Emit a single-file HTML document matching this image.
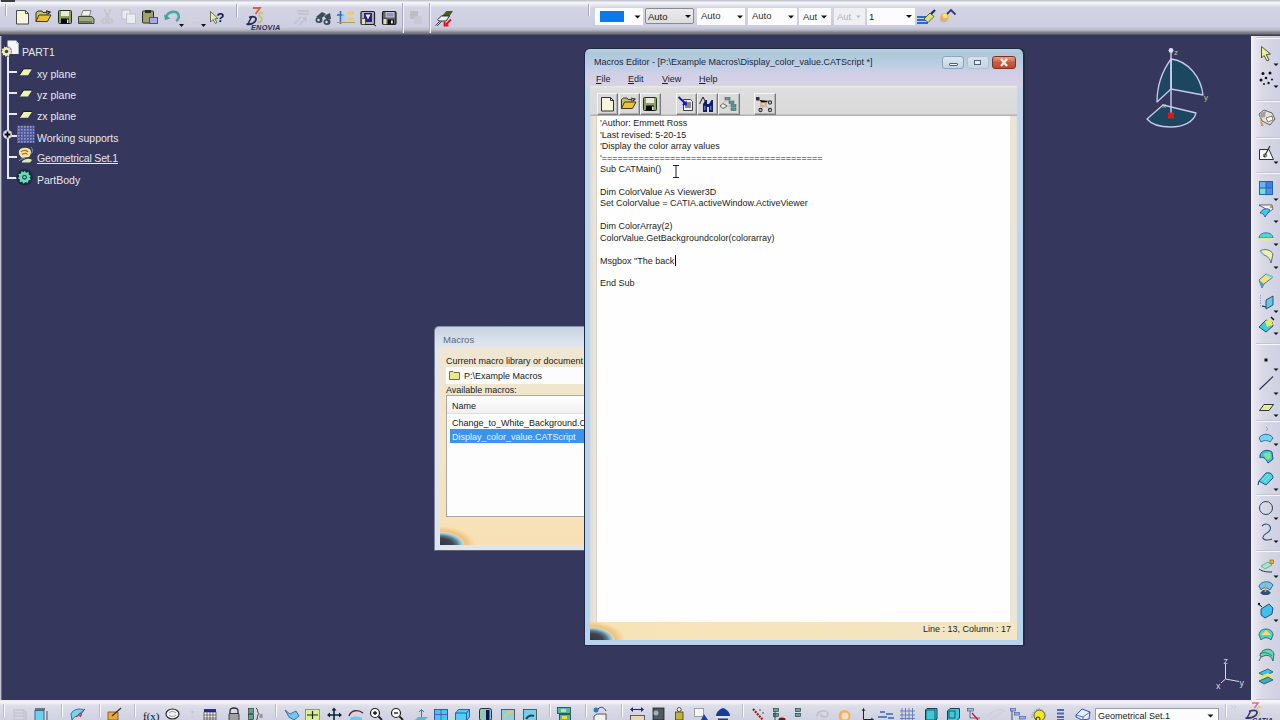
<!DOCTYPE html>
<html><head><meta charset="utf-8">
<style>
*{margin:0;padding:0;box-sizing:border-box}
html,body{width:1280px;height:720px;overflow:hidden;background:#36375c;font-family:"Liberation Sans",sans-serif}
.a{position:absolute}
#toptb{left:0;top:0;width:1280px;height:36px;background:linear-gradient(#c6c6ce 0px,#c6c6ce 1px,#f6f7fb 2px,#eceef4 4px,#d3d4e2 8px,#cfd0e2 20px,#cbcde0 27px,#b9bac4 30px,#8a8a92 32px,#6e6e78 34px,#3c3c58 35px,#36375c 36px)}
#righttb{left:1251px;top:36px;width:29px;height:664px;background:linear-gradient(90deg,#f4f4f8 0,#e8e8f0 3px,#d8d9e6 12px,#cfd0e2 29px)}
#bottb{left:0;top:700px;width:1280px;height:20px;background:linear-gradient(#e8e9f0 0,#f4f4f8 2px,#dcdde8 6px,#d0d1e2 20px)}
.t{position:absolute;white-space:pre;line-height:1}
.tree{color:#e6e6ee;font-size:10.5px}
.ed{color:#1c1c1c;font-size:9px}
.sep{position:absolute;width:2px;background:linear-gradient(90deg,#a8a8b4 0,#a8a8b4 1px,#fbfbff 1px)}
</style></head><body>
<div id="toptb" class="a"></div>
<div class="a" style="left:1px;top:0;width:14px;height:1.5px;background:#3c3c40"></div>
<div id="righttb" class="a"></div>
<div id="bottb" class="a"></div>



<!-- top toolbar icons -->
<svg class="a" style="left:0;top:0" width="1280" height="36" viewBox="0 0 1280 36">
 <g stroke="#fafaff" stroke-width="1"><path d="M6.5 4 V16"/><path d="M237.5 4 V17"/><path d="M589.5 4 V16"/></g>
 <g stroke="#a8a8b8" stroke-width="1"><path d="M5.5 4 V16"/><path d="M236.5 4 V17"/><path d="M588.5 4 V16"/><path d="M402.5 3 V33"/><path d="M429.5 3 V33"/></g>
 <g stroke="#f4f4fa" stroke-width="1"><path d="M403.5 3 V33"/><path d="M430.5 3 V33"/></g>
 <!-- new -->
 <path d="M16.5 10.5 H25.5 L28.5 13.5 V24 H16.5 Z" fill="#f6f6da" stroke="#4a4a4a"/>
 <path d="M25.5 10.5 V13.5 H28.5" fill="none" stroke="#4a4a4a"/>
 <!-- open -->
 <path d="M36 21.5 V12.5 L38 11 H42 L43 12.5 H47 V15" fill="#c8c070" stroke="#3a3a20"/>
 <path d="M36 21.5 L39 15 H51 L47.5 21.5 Z" fill="#e8c030" stroke="#3a3a20"/>
 <path d="M46 11 L50 12 L48 14" fill="none" stroke="#303030" stroke-width="1.3"/>
 <!-- save -->
 <rect x="58.5" y="10.5" width="13" height="13" rx="1" fill="#8ca060" stroke="#203018"/>
 <rect x="61" y="11" width="8" height="5" fill="#e8e8e0"/>
 <rect x="61" y="18.5" width="8" height="5" fill="#000"/>
 <rect x="67" y="19.5" width="1.5" height="3.5" fill="#e0e0e0"/>
 <!-- print -->
 <path d="M81 16 L83 10.5 H91 L89.5 16Z" fill="#f0f0f0" stroke="#808080"/>
 <path d="M78.5 16.5 H92 L94 19 V23.5 H78.5 Z" fill="#a0a880" stroke="#404838"/>
 <rect x="79" y="21" width="13" height="2" fill="#707a60"/>
 <!-- cut disabled -->
 <g stroke="#c4c4cc" stroke-width="1.6" fill="none"><path d="M104 9.5 L109 18 M111 9.5 L106 18"/><circle cx="104.5" cy="21" r="2.2"/><circle cx="110" cy="21" r="2.2"/></g>
 <!-- copy disabled -->
 <g fill="#ececf0" stroke="#c0c0c8"><rect x="122" y="10" width="8" height="9"/><rect x="126.5" y="14" width="9" height="9.5"/></g>
 <!-- paste -->
 <rect x="142.5" y="11" width="11" height="12" rx="1" fill="#a0a070" stroke="#30301a"/>
 <rect x="145" y="10" width="6" height="3" fill="#30301a"/>
 <rect x="149.5" y="17.5" width="8" height="6" fill="#a8a8e0" stroke="#4a4a90"/>
 <!-- undo -->
 <path d="M166 17 C168 11 177 10 178.5 15 C179.5 18 177.5 20 176 21" fill="none" stroke="#48a8a0" stroke-width="2.6"/>
 <path d="M164 14.5 L165 20 L170.5 18.5Z" fill="#40a098"/>
 <path d="M179 24 H184 L181.5 27Z" fill="#101010"/>
 <!-- redo disabled -->
 <path d="M189 19 C189 12 198 11 199 16" fill="none" stroke="#d4d4dc" stroke-width="2"/>
 <path d="M187.5 20.5 H201" stroke="#d4d4dc" stroke-width="1"/>
 <path d="M201 24 H206 L203.5 27Z" fill="#101010"/>
 <!-- what's this -->
 <path d="M210.5 11.5 L210.5 22 L213 19.5 L215.5 23.5 L217 22.5 L214.8 18.8 L218 18.5Z" fill="#e4eab0" stroke="#505040" stroke-width=".8"/>
 <text x="216.5" y="21.8" font-family="Liberation Sans" font-weight="bold" font-size="13" fill="#14145a">?</text>
 <!-- 3DS ENOVIA -->
 <path d="M253 8 H260 L255.5 14" fill="none" stroke="#d86040" stroke-width="1.8"/>
 <path d="M249 17.5 C254 15.5 258 17.5 255 21.5 C253 24 249 24.5 246.5 24" fill="none" stroke="#2a2a50" stroke-width="1.8"/>
 <path d="M251.5 17 L248 24" stroke="#2a2a50" stroke-width="1.5"/>
 <path d="M263 13 C259 12 258 15 260.5 17 C263 19 262 22 257.5 22.5" fill="none" stroke="#c8c070" stroke-width="1.8"/>
 <text x="251" y="29.8" font-family="Liberation Sans" font-weight="bold" font-style="italic" font-size="7.3" fill="#2a2a5a" letter-spacing=".25">ENOVIA</text>
 <!-- disabled arrows -->
 <g stroke="#c0c0c8" stroke-width="1.4" fill="none"><path d="M297 11 H309 M298 14 H309"/><path d="M294 24 L301 17 M299 25 L306 18 M303 18 H306 V21"/></g>
 <!-- binoculars -->
 <g fill="#3a4a58"><ellipse cx="319" cy="20" rx="3.5" ry="3"/><ellipse cx="327" cy="22" rx="3.5" ry="3"/><path d="M316 17 L322 12 L326 14 L322 18Z"/><path d="M324 16 L330 13 L331 19 L327 20Z"/></g>
 <g fill="#e8e8e8"><circle cx="318.5" cy="20" r="1.2"/><circle cx="326.5" cy="22" r="1.2"/></g>
 <!-- figure + bars -->
 <g stroke="#3070c0" stroke-width="1.6"><path d="M340.5 11 V24"/><path d="M337 15 H344"/></g>
 <rect x="342" y="14" width="4" height="8" fill="#b0d0e8" opacity=".7"/>
 <g fill="#e8d060"><rect x="347" y="11.5" width="7" height="3"/><rect x="347" y="17.5" width="7" height="3"/></g>
 <path d="M337 22.5 H355" stroke="#a0a060" stroke-width="1"/>
 <!-- shield/frame -->
 <rect x="361" y="11.5" width="13.5" height="13" rx="1.2" fill="#b0b0c0" stroke="#202028" stroke-width="1.2"/>
 <path d="M364 13 H372 V22 H364Z" fill="#2a2080"/>
 <path d="M365.5 14.5 H370.5 L368 19.5Z" fill="#f0f0ff"/>
 <rect x="361.5" y="18.5" width="4" height="6" rx="1" fill="#e0e0b8" stroke="#303020" stroke-width=".7"/>
 <path d="M373 24 L376 26" stroke="#101010" stroke-width="1"/>
 <!-- floppy + cylinder -->
 <rect x="382.5" y="11.5" width="13.5" height="13" rx="1.2" fill="#606a58" stroke="#202020" stroke-width="1.2"/>
 <rect x="386" y="12.5" width="8" height="4.5" fill="#9090d0" stroke="#f0f0f0" stroke-width=".6"/>
 <rect x="388" y="19.5" width="6" height="4.5" fill="#101010"/>
 <rect x="391" y="20.5" width="1.8" height="3" fill="#f0f0f0"/>
 <rect x="383" y="18.5" width="4" height="6" rx="1" fill="#e0e0b8" stroke="#303020" stroke-width=".7"/>
 <!-- disabled gray -->
 <g fill="#bcbcc4"><rect x="410" y="11" width="8" height="8" rx="1"/><rect x="414" y="16" width="8" height="8" rx="2" fill="#c8c8d0"/></g>
 <!-- plug -->
 <path d="M441 17 L446.5 11 H453 L449 17Z" fill="#4a5a20"/>
 <path d="M437.5 19.5 L441.5 16 H449.5 L446 21 H439Z" fill="#f0f4f0" stroke="#202020" stroke-width=".9"/>
 <path d="M435.5 25.5 L440 21 M437 26 L441.5 21.5" stroke="#303048" stroke-width=".9"/>
 <path d="M451 19.5 L446 24.5 M444.5 21.5 V25.5 H448.5" stroke="#e01020" stroke-width="1.8" fill="none"/>
</svg>


<!-- combos -->
<div class="a" style="left:595px;top:8px;width:48px;height:17px;background:#fcfcfe"></div>
<div class="a" style="left:600px;top:11px;width:24px;height:11px;background:#0a7ae8"></div>
<div class="a" style="left:645px;top:8px;width:49px;height:16px;background:linear-gradient(#ececec,#dcdcdc);border:1px solid #8a8a8a;border-radius:2px"></div>
<div class="a" style="left:697px;top:8px;width:48px;height:17px;background:#fcfcfe"></div>
<div class="a" style="left:748px;top:8px;width:49px;height:17px;background:#fcfcfe"></div>
<div class="a" style="left:799px;top:8px;width:32px;height:17px;background:#fcfcfe"></div>
<div class="a" style="left:834px;top:8px;width:31px;height:17px;background:#f0f0f4"></div>
<div class="a" style="left:867px;top:8px;width:48px;height:17px;background:#fcfcfe"></div>
<div class="t" style="left:648px;top:12px;font-size:9.5px;color:#202020">Auto</div>
<div class="t" style="left:701px;top:11px;font-size:9.5px;color:#303030">Auto</div>
<div class="t" style="left:752px;top:11px;font-size:9.5px;color:#303030">Auto</div>
<div class="t" style="left:803px;top:11.5px;font-size:9.5px;color:#303030">Aut</div>
<div class="t" style="left:837px;top:11.5px;font-size:9.5px;color:#b0b0b8">Aut</div>
<div class="t" style="left:869px;top:11.5px;font-size:9.5px;color:#202020">1</div>
<svg class="a" style="left:580px;top:0" width="400" height="36" viewBox="580 0 400 36">
 <g fill="#101010"><path d="M634.5 15.5 H640.5 L637.5 18.5Z"/><path d="M685 15 H691 L688 18Z"/><path d="M737 15.5 H743 L740 18.5Z"/><path d="M788 15.5 H794 L791 18.5Z"/><path d="M821 15.5 H827 L824 18.5Z"/><path d="M906 15 H912 L909 18Z"/></g>
 <path d="M856 15.5 H861 L858.5 18Z" fill="#b8b8c0"/>
 <!-- brush -->
 <g><rect x="917" y="16" width="11" height="2" fill="#2a68d8"/><rect x="917" y="19" width="11" height="2" fill="#2a68d8"/><rect x="917" y="22" width="11" height="2" fill="#2a68d8"/>
 <path d="M924 19 L930 13 L934 16.5 L928 22.5Z" fill="#e0e070" stroke="#404020" stroke-width=".8"/>
 <path d="M931 14 L935 10" stroke="#1a2a70" stroke-width="2.2"/></g>
 <!-- ball -->
 <circle cx="944.5" cy="17.5" r="4.5" fill="#e8c840"/>
 <circle cx="943.5" cy="19" r="3.5" fill="#d890d0" opacity=".5"/>
 <circle cx="945" cy="16" r="2.2" fill="#f8e868"/>
 <path d="M947 14 L951 10 L955.5 14.5" fill="none" stroke="#303a78" stroke-width="1.8"/>
</svg>


<!-- compass -->
<svg class="a" style="left:1130px;top:40px" width="100" height="100" viewBox="1130 40 100 100">
 <g stroke="#c8c8f0" stroke-width="1.3" fill="#1d4760" stroke-linejoin="round">
  <path d="M1171 59 C1188 61 1201 77 1203 95 L1171 89 Z"/>
  <path d="M1171 59 C1163 70 1157 86 1157 102 L1171 89 Z"/>
  <path d="M1147 119 L1163 105 L1196 113 C1194 122 1183 127 1171 127 C1160 127 1151 124 1147 119Z"/>
 </g>
 <path d="M1171 51 V115" stroke="#d0d0f4" stroke-width="1.4"/>
 <circle cx="1171" cy="50.5" r="2.4" fill="#e0e0ff"/>
 <rect x="1168" y="112.5" width="6" height="6" fill="#e01818"/>
 <g font-family="Liberation Sans" font-size="8" fill="#c8c890"><text x="1174" y="55">z</text><text x="1204" y="100">y</text><text x="1162" y="108">x</text></g>
</svg>
<!-- axis -->
<svg class="a" style="left:1210px;top:650px" width="40" height="45" viewBox="1210 650 40 45">
 <g stroke="#d8d8e8" stroke-width="1" fill="none"><path d="M1225.5 679 V664"/><path d="M1225.5 679 L1239 681.5"/><path d="M1225.5 679 L1221 683"/></g>
 <g font-family="Liberation Sans" font-size="9" fill="#d8d8e8"><text x="1223.5" y="664">z</text><text x="1239.5" y="685.5">y</text><text x="1216" y="688.5">x</text></g>
</svg>


<!-- right toolbar -->
<svg class="a" style="left:1251px;top:36px" width="29" height="684" viewBox="1251 36 29 684">
 <g stroke-width="1"><path d="M1256 37.5 H1280" stroke="#c4c4d2"/><path d="M1256 38.5 H1280" stroke="#f8f8ff"/><path d="M1256 100.5 H1280" stroke="#c4c4d2"/><path d="M1256 101.5 H1280" stroke="#f8f8ff"/><path d="M1256 137.5 H1280" stroke="#c4c4d2"/><path d="M1256 138.5 H1280" stroke="#f8f8ff"/><path d="M1256 172.5 H1280" stroke="#c4c4d2"/><path d="M1256 173.5 H1280" stroke="#f8f8ff"/><path d="M1256 343.5 H1280" stroke="#c4c4d2"/><path d="M1256 344.5 H1280" stroke="#f8f8ff"/><path d="M1256 420.5 H1280" stroke="#c4c4d2"/><path d="M1256 421.5 H1280" stroke="#f8f8ff"/><path d="M1256 494.5 H1280" stroke="#c4c4d2"/><path d="M1256 495.5 H1280" stroke="#f8f8ff"/><path d="M1256 550.5 H1280" stroke="#c4c4d2"/><path d="M1256 551.5 H1280" stroke="#f8f8ff"/><path d="M1256 699.5 H1280" stroke="#c4c4d2"/><path d="M1256 700.5 H1280" stroke="#f8f8ff"/></g>
 <g fill="#101010"><path d="M1273.5 63.5 H1278.5 L1276 66.0Z"/><path d="M1273.5 85.5 H1278.5 L1276 88.0Z"/><path d="M1273.5 161.5 H1278.5 L1276 164.0Z"/><path d="M1273.5 198.5 H1278.5 L1276 201.0Z"/><path d="M1273.5 220.5 H1278.5 L1276 223.0Z"/><path d="M1273.5 243.5 H1278.5 L1276 246.0Z"/><path d="M1273.5 266.5 H1278.5 L1276 269.0Z"/><path d="M1273.5 310.5 H1278.5 L1276 313.0Z"/><path d="M1273.5 332.5 H1278.5 L1276 335.0Z"/><path d="M1273.5 368.5 H1278.5 L1276 371.0Z"/><path d="M1273.5 392.5 H1278.5 L1276 395.0Z"/><path d="M1273.5 414.5 H1278.5 L1276 417.0Z"/><path d="M1273.5 443.5 H1278.5 L1276 446.0Z"/><path d="M1273.5 488.5 H1278.5 L1276 491.0Z"/><path d="M1273.5 517.5 H1278.5 L1276 520.0Z"/><path d="M1273.5 540.5 H1278.5 L1276 543.0Z"/><path d="M1273.5 575.5 H1278.5 L1276 578.0Z"/><path d="M1273.5 619.5 H1278.5 L1276 622.0Z"/></g>
 <!-- cursor -->
 <path d="M1261.5 46.5 V58 L1264 55.5 L1267 61 L1269 60 L1266.3 54.5 L1270.5 54Z" fill="#e8f098" stroke="#404838" stroke-width=".9"/>
 <!-- scatter -->
 <g fill="#101018"><circle cx="1263" cy="73.5" r="1.5"/><circle cx="1270" cy="73" r="1.5"/><circle cx="1261" cy="80" r="1.5"/><circle cx="1266" cy="78" r="1.3"/><circle cx="1268.5" cy="83" r="1.2"/><circle cx="1272" cy="79.5" r="1"/><circle cx="1264" cy="84" r="1"/></g>
 <!-- sketcher -->
 <path d="M1259 114 L1264 110 L1272 113 L1275 119 L1270 125 L1262 121Z" fill="#e8e0d0" stroke="#404040" stroke-width=".8"/>
 <path d="M1261 113 L1266 111 L1265 117 L1260 118Z" fill="#a0a0a0"/>
 <path d="M1260 119 L1264 126 L1261 126Z" fill="#e09050"/>
 <path d="M1266 118 L1272 116 L1273 120 L1268 122Z" fill="#f8f8f8" stroke="#303030" stroke-width=".6"/>
 <!-- sketch edit -->
 <path d="M1259.5 149.5 H1269 L1273.5 159.5 H1259.5Z" fill="#f8f8f8" stroke="#303030" stroke-width="1"/>
 <path d="M1264 157 L1270 146" stroke="#303030" stroke-width="1.2"/>
 <circle cx="1265" cy="155.5" r="1.6" fill="none" stroke="#303030" stroke-width=".8"/>
 <!-- blue grid -->
 <rect x="1259" y="181" width="14" height="14" fill="#2060c0"/>
 <g fill="#70b0f0"><rect x="1260" y="182" width="5.5" height="5.5"/><rect x="1266.5" y="182" width="5.5" height="5.5" fill="#4080d8"/><rect x="1260" y="188.5" width="5.5" height="5.5" fill="#70e0d0"/><rect x="1266.5" y="188.5" width="5.5" height="5.5" fill="#5090e0"/></g>
 <!-- sweep -->
 <path d="M1259 205 L1272 205 L1273 209 L1268 213 L1266 209Z" fill="#f8f8f8" stroke="#303030" stroke-width=".7"/>
 <path d="M1260 213 C1263 208 1268 208 1270 210 L1265 217 C1264 214 1262 213 1260 213Z" fill="#40c8e8" stroke="#2030a0" stroke-width=".7"/>
 <circle cx="1271" cy="207" r="1.3" fill="#d0a040"/>
 <!-- dome -->
 <path d="M1259 238 C1259 231 1273 231 1273 238Z" fill="#50d8d0" stroke="#2070a0" stroke-width=".8"/>
 <rect x="1259" y="238" width="14" height="2.5" fill="#e0e8a0"/>
 <!-- curved surface -->
 <path d="M1260 251 C1265 248 1271 250 1273 254 L1271 263 C1270 258 1267 256 1264 255Z" fill="#f0f0b0" stroke="#405070" stroke-width=".8"/>
 <path d="M1260 251 L1264 255" stroke="#70b0d0" stroke-width="1.5"/>
 <!-- yellow panel -->
 <path d="M1259 280 L1266 274 L1273 277 L1264 284 L1262 288Z" fill="#f0e080" stroke="#306080" stroke-width=".8"/>
 <path d="M1259 280 L1262 288 L1264 284Z" fill="#40a8d0"/>
 <path d="M1266 274 L1273 277" stroke="#60d0e0" stroke-width="1.5"/>
 <!-- dashed + panel -->
 <path d="M1260.5 295 V306 H1264" fill="none" stroke="#8090b0" stroke-width=".8" stroke-dasharray="1.5 1"/>
 <path d="M1266 300 L1273 296 V305 L1266 309Z" fill="#60c8e8" stroke="#203050" stroke-width=".8"/>
 <path d="M1262 306 L1266 307" stroke="#202040" stroke-width="1.2"/>
 <!-- yellow-blue arrow -->
 <path d="M1259 327 L1266 320 L1272 322 L1273 326 L1266 332Z" fill="#40c8e0" stroke="#103040" stroke-width=".8"/>
 <path d="M1265 321 L1271 319 L1273 325 L1267 327Z" fill="#e8e860"/>
 <path d="M1271 317 L1274 320" stroke="#101010" stroke-width="1.5"/>
 <!-- point -->
 <rect x="1264.5" y="358.5" width="3" height="3" fill="#101010"/>
 <!-- line -->
 <path d="M1259.5 389.5 L1273 376.5" stroke="#203050" stroke-width="1.1"/>
 <!-- plane -->
 <path d="M1259.5 410.5 L1264 404.5 H1273.5 L1269 410.5Z" fill="#e0ee98" stroke="#202020" stroke-width=".9"/>
 <!-- surface -->
 <path d="M1259 438 C1262 433 1270 433 1273 438 L1270 442 C1267 440 1264 440 1261 442Z" fill="#70d8e8" stroke="#2050a0" stroke-width=".8"/>
 <path d="M1266 431 C1268 429 1268 428 1266 427" fill="none" stroke="#8090b0" stroke-width=".8"/>
 <!-- green arrows surface -->
 <path d="M1260 455 C1262 450 1268 449 1272 452 L1273 459 L1268 463 C1266 458 1262 456 1260 458Z" fill="#40c0e8" stroke="#103070" stroke-width=".8"/>
 <path d="M1263 454 L1270 452 L1271 458 L1267 460Z" fill="#80e880"/>
 <!-- channel -->
 <path d="M1259 481 L1266 473 C1270 472 1273 474 1273 478 L1266 485Z" fill="#50d0d8" stroke="#103070" stroke-width=".8"/>
 <path d="M1262 480 L1268 474 M1264 482 L1270 476" stroke="#a0f0c0" stroke-width=".8"/>
 <path d="M1259 481 L1258 485" stroke="#103070" stroke-width="1"/>
 <!-- circle -->
 <circle cx="1266" cy="508" r="6.5" fill="none" stroke="#304060" stroke-width="1"/>
 <!-- spline -->
 <path d="M1262 526 C1266 522 1272 525 1270 530 C1268 534 1262 534 1263 538 C1264 541 1270 540 1272 539" fill="none" stroke="#304880" stroke-width="1.1"/>
 <!-- 20 -->
 <path d="M1259 569 C1263 572 1268 572 1272 572" stroke="#203050" stroke-width="1" fill="none"/>
 <path d="M1261 566 L1268 562 L1272 565 L1265 569Z" fill="#a0e8c8" stroke="#40a080" stroke-width=".7"/>
 <rect x="1270" y="560" width="3.5" height="3.5" fill="#f0b040" stroke="#805010" stroke-width=".6"/>
 <!-- 21 -->
 <path d="M1259 586 C1261 581 1270 580 1273 585 L1270 590 C1267 587 1263 587 1261 590Z" fill="#70c8f0" stroke="#205080" stroke-width=".8"/>
 <path d="M1260 593 L1263 590 H1268 L1271 593 L1268 595 H1263Z" fill="#305070"/>
 <path d="M1265.5 584 V592" stroke="#e0a030" stroke-width="1.6"/>
 <!-- 22 -->
 <path d="M1261 609 L1269 604 L1273 608 L1272 614 L1265 618 L1261 615Z" fill="#40c0e8" stroke="#103050" stroke-width=".8"/>
 <path d="M1258.5 604 L1262 607" stroke="#101010" stroke-width="1"/><circle cx="1259" cy="604" r="1.2" fill="#101010"/>
 <!-- 23 -->
 <path d="M1259 635 C1259 627 1273 627 1273 635 L1271 640 C1268 637 1264 637 1261 640Z" fill="#50d0d0" stroke="#205070" stroke-width=".8"/>
 <path d="M1261 635 L1266 630 L1271 635Z" fill="#f0e060"/>
 <!-- 24 -->
 <path d="M1260 656 C1260 649 1272 646 1274 654 L1273 661 C1271 655 1266 654 1262 657Z" fill="#60d8b8" stroke="#205050" stroke-width=".8"/>
 <path d="M1260 654 C1263 652 1268 652 1272 656" stroke="#205050" stroke-width=".7" fill="none"/>
 <path d="M1261 657 L1259 661" stroke="#404040" stroke-width=".8"/>
 <!-- 25 -->
 <path d="M1259 673 L1268 669 L1273 672 L1264 676Z" fill="#40c0e8" stroke="#104050" stroke-width=".7"/>
 <path d="M1259 677 L1268 673 L1273 676 L1264 680Z" fill="#e8e860"/>
 <path d="M1259 681 L1268 677 L1273 680 L1264 684Z" fill="#40a8c0" stroke="#104050" stroke-width=".7"/>
</svg>


<!-- bottom toolbar -->
<svg class="a" style="left:0;top:700px" width="1251" height="20" viewBox="0 700 1251 20">
 <g stroke-width="1"><path d="M3.5 704 V717" stroke="#b8b8c6"/><path d="M4.5 704 V717" stroke="#fafaff"/><path d="M61.5 704 V717" stroke="#b8b8c6"/><path d="M62.5 704 V717" stroke="#fafaff"/><path d="M99.5 704 V717" stroke="#b8b8c6"/><path d="M100.5 704 V717" stroke="#fafaff"/><path d="M134.5 704 V717" stroke="#b8b8c6"/><path d="M135.5 704 V717" stroke="#fafaff"/><path d="M275.5 704 V717" stroke="#b8b8c6"/><path d="M276.5 704 V717" stroke="#fafaff"/><path d="M549.5 704 V717" stroke="#b8b8c6"/><path d="M550.5 704 V717" stroke="#fafaff"/><path d="M585.5 704 V717" stroke="#b8b8c6"/><path d="M586.5 704 V717" stroke="#fafaff"/><path d="M621.5 704 V717" stroke="#b8b8c6"/><path d="M622.5 704 V717" stroke="#fafaff"/><path d="M742.5 704 V717" stroke="#b8b8c6"/><path d="M743.5 704 V717" stroke="#fafaff"/></g>
 <!-- gray disabled -->
 <g fill="none" stroke="#c0c0c8" stroke-width="1.2"><rect x="14" y="710" width="10" height="10"/><path d="M14 713 H24 M14 716 H24"/><path d="M26 711 V720"/></g>
 <!-- blue glass -->
 <path d="M35 709 H45" stroke="#303030" stroke-width="1.2"/>
 <rect x="35" y="710.5" width="9" height="10" fill="#70d0ec" stroke="#205070" stroke-width=".8"/>
 <path d="M47 711 V720" stroke="#303030" stroke-width=".8"/>
 <!-- curved -->
 <path d="M71 714 C73 709 80 708 84 710 L80 716 C77 715 74 717 72 720Z" fill="#70d8e8" stroke="#2050a0" stroke-width=".8"/>
 <path d="M76 717 L85 709 M78 715 C81 712 83 715 80 717" stroke="#c02040" stroke-width="1" fill="none"/>
 <!-- orange -->
 <path d="M108 712 H118 V720 H108Z" fill="#e8a840" stroke="#805010" stroke-width=".8"/>
 <path d="M112 716 L121 708" stroke="#303030" stroke-width="1.2"/>
 <!-- fx -->
 <text x="143" y="720" font-family="Liberation Serif" font-size="11" fill="#101010">f(x)</text>
 <!-- brain -->
 <ellipse cx="172.5" cy="714" rx="6.5" ry="5" fill="#f0f0f0" stroke="#202020" stroke-width="1.1"/>
 <path d="M169 713 C171 711 174 711 176 713 M169 715 C171 717 174 717 176 715" stroke="#707070" stroke-width=".7" fill="none"/>
 <!-- small gray -->
 <circle cx="192.5" cy="712" r="1.5" fill="#c8c8d0"/><path d="M191 715 H194 V719 H191Z" fill="#d0d0d8"/>
 <!-- grid -->
 <rect x="204" y="709" width="12" height="3" fill="#2828c0"/>
 <rect x="204" y="712" width="12" height="8" fill="#f0f0f0" stroke="#202020" stroke-width=".6"/>
 <path d="M207 712 V720 M210 712 V720 M213 712 V720 M204 715 H216 M204 718 H216" stroke="#303030" stroke-width=".6"/>
 <!-- lock -->
 <path d="M230 714 V711 C230 707 238 707 238 711 V714" fill="none" stroke="#303030" stroke-width="1.3"/>
 <rect x="229" y="713.5" width="10" height="7" rx="1" fill="#a0a0a0" stroke="#202020" stroke-width=".8"/>
 <!-- equation -->
 <rect x="248.5" y="708.5" width="5" height="5" fill="#60a090" stroke="#202020" stroke-width=".6"/>
 <rect x="248.5" y="714.5" width="5" height="5" fill="#60a090" stroke="#202020" stroke-width=".6"/>
 <path d="M256 708 C258 708 257 713 259 713.5 C257 714 258 720 256 720" fill="none" stroke="#202020" stroke-width=".8"/>
 <path d="M259.5 715 H262.5 M259.5 717 H262.5" stroke="#202020" stroke-width=".7"/>
 <!-- blue figure -->
 <path d="M285 710 L290 714 L296 711 L299 716 L294 720 L289 717 Z" fill="#70c8f0" stroke="#305080" stroke-width=".8"/>
 <!-- yellow square arrows -->
 <rect x="305.5" y="709.5" width="14" height="11" fill="#d8f090" stroke="#40a080" stroke-width=".8"/>
 <path d="M312.5 711 V719 M307 715 H318" stroke="#202020" stroke-width="1.2"/>
 <!-- pan -->
 <path d="M334 709 V720 M328 715 H341" stroke="#10203a" stroke-width="1.6"/>
 <path d="M334 707.5 L336.5 710.5 H331.5Z M327 715 L330 712.5 V717.5Z M342 715 L339 712.5 V717.5Z" fill="#10203a"/>
 <!-- rotate -->
 <path d="M349 716 C351 710 358 709 363 713" stroke="#303030" stroke-width="1.3" fill="#f0c8d8"/>
 <path d="M350 718 C353 716 358 716 362 718 V720 H350Z" fill="#70c8e8"/>
 <!-- zoom in/out -->
 <circle cx="375" cy="713" r="4.5" fill="#fafafa" stroke="#202020" stroke-width="1.2"/>
 <path d="M373 713 H377 M375 711 V715" stroke="#101010" stroke-width="1.3"/>
 <path d="M378.5 716.5 L382 720" stroke="#202020" stroke-width="1.8"/>
 <circle cx="396" cy="713" r="4.5" fill="#fafafa" stroke="#202020" stroke-width="1.2"/>
 <path d="M394 713 H398" stroke="#101010" stroke-width="1.3"/>
 <path d="M399.5 716.5 L403 720" stroke="#202020" stroke-width="1.8"/>
 <!-- normal view -->
 <path d="M421.5 718 V710 M419 712 L421.5 709.5 L424 712" stroke="#307080" stroke-width=".9" fill="none"/>
 <path d="M415 720 L418 717 H428 L425 720Z" fill="#60b8d0"/>
 <!-- multiview blue -->
 <rect x="434.5" y="709.5" width="13" height="11" fill="#40c8f0" stroke="#2040a0" stroke-width=".8"/>
 <path d="M441 709.5 V720 M434.5 714.5 H447.5" stroke="#6040a0" stroke-width=".8"/>
 <!-- iso cube -->
 <path d="M455.5 713 L458.5 709.5 H469.5 V717 L466.5 720.5 H455.5Z" fill="#50d0f0" stroke="#2040a0" stroke-width=".8"/>
 <path d="M455.5 713 H466.5 V720.5 M466.5 713 L469.5 709.5" stroke="#2040a0" stroke-width=".8" fill="none"/>
 <!-- glass -->
 <rect x="479.5" y="708.5" width="12" height="12" rx="2" fill="#90c8b0" stroke="#303030" stroke-width="1"/>
 <rect x="486" y="710" width="3.5" height="10" fill="#101060"/>
 <!-- small views -->
 <rect x="501.5" y="709.5" width="13" height="11" fill="#90d0e0" stroke="#404040" stroke-width=".8"/>
 <path d="M504 718 C506 713 510 712 513 712" stroke="#e0c870" stroke-width="2" fill="none"/>
 <rect x="523.5" y="709.5" width="13" height="11" fill="#70d0e8" stroke="#404040" stroke-width=".8"/>
 <path d="M526 719 C528 716 531 715 534 716" stroke="#304050" stroke-width="2" fill="none"/>
 <!-- two small -->
 <rect x="557.5" y="707.5" width="13" height="6" fill="#50b8b0" stroke="#204040" stroke-width=".8"/>
 <rect x="559.5" y="714.5" width="11" height="6" fill="#50b8b0" stroke="#204040" stroke-width=".8"/>
 <rect x="561" y="709" width="5" height="3" fill="#e0e040"/><rect x="562" y="716" width="5" height="3" fill="#e0e040"/>
 <!-- sphere cube -->
 <circle cx="596" cy="710" r="2.5" fill="#2080b0"/>
 <path d="M598 709 C601 706 604 707 606 711" stroke="#3030b0" stroke-width="1" fill="none"/>
 <path d="M594 720 V716 L597 714 H606 V720" fill="#f0f0f0" stroke="#303030" stroke-width=".8"/>
 <!-- ruler -->
 <path d="M631 709.5 H643" stroke="#202870" stroke-width="1.1"/>
 <path d="M630 709.5 L633 707 V712Z M644 709.5 L641 707 V712Z" fill="#202870"/>
 <rect x="630.5" y="715.5" width="14" height="5" fill="#e8d8b0" stroke="#404040" stroke-width=".8"/>
 <!-- dark machine -->
 <rect x="653" y="708" width="11" height="12" fill="#505860" stroke="#202020" stroke-width=".8"/>
 <circle cx="656" cy="713" r="2.5" fill="#a0b0c0"/>
 <!-- cylinder -->
 <rect x="675.5" y="712" width="7.5" height="8" fill="#c0b040" stroke="#404010" stroke-width=".8"/>
 <circle cx="679.2" cy="709.5" r="2" fill="#f0f0f0" stroke="#303020" stroke-width=".8"/>
 <!-- gray/blue -->
 <rect x="694.5" y="708.5" width="9" height="8" fill="#f4f4f4" stroke="#909090" stroke-width=".8"/>
 <path d="M701 720 L704 714 L708 720Z" fill="#2040a0"/>
 <!-- blue cone -->
 <path d="M716 716 C716 711 722 708 723 708 C724 708 730 711 730 716Z" fill="#1a3aa0"/>
 <path d="M716 717 H730" stroke="#f0f0f0" stroke-width="1.2"/>
 <path d="M718 718.5 H728 V720 H718Z" fill="#1a3aa0"/>
 <!-- red dashed -->
 <path d="M753 709 L763 720" stroke="#902020" stroke-width="2.2" stroke-dasharray="2 1"/>
 <g fill="#404040"><circle cx="760" cy="710" r=".8"/><circle cx="763" cy="713" r=".8"/></g>
 <!-- tree struct -->
 <rect x="773.5" y="708.5" width="5" height="3" fill="#60a8a0" stroke="#203030" stroke-width=".6"/>
 <rect x="773.5" y="713.5" width="5" height="3" fill="#60a8a0" stroke="#203030" stroke-width=".6"/>
 <path d="M775 711.5 V720" stroke="#203030" stroke-width=".8"/>
 <ellipse cx="782" cy="719.5" rx="3.5" ry="2" fill="#801010"/>
 <rect x="795.5" y="708.5" width="5" height="3" fill="#60a8a0" stroke="#203030" stroke-width=".6"/>
 <rect x="795.5" y="713.5" width="5" height="3" fill="#60a8a0" stroke="#203030" stroke-width=".6"/>
 <!-- gray swirl -->
 <path d="M817 716 C817 710 828 709 828 714 C828 718 821 718 821 714" fill="none" stroke="#c0c0c8" stroke-width="1.6"/>
 <!-- orange blob -->
 <circle cx="844.5" cy="716" r="6" fill="#f0b060"/>
 <circle cx="845" cy="716" r="3.5" fill="#f8e0c0"/>
 <!-- axis -->
 <path d="M863.5 709 V719.5 H873" stroke="#202030" stroke-width="1" fill="none"/>
 <path d="M862 711 L863.5 708.5 L865 711 M871 718 L873.5 719.5 L871 721" fill="none" stroke="#202030" stroke-width=".8"/>
 <!-- blue list -->
 <g fill="#6080c0"><rect x="880" y="711" width="5" height="2"/><rect x="886" y="713" width="7" height="2"/><rect x="878" y="716" width="9" height="2"/><rect x="888" y="717" width="6" height="2"/></g>
 <!-- grid blue -->
 <path d="M902 708 V720 M905.5 708 V720 M909 708 V720 M912.5 708 V720 M900 711 H915 M900 715 H915 M900 718.5 H915" stroke="#5070b0" stroke-width=".8"/>
 <!-- teal boxes -->
 <path d="M925.5 710 L927 708.5 H937 V719 L935 720.5 H925.5Z" fill="#40c8d8" stroke="#104050" stroke-width="1"/>
 <rect x="926" y="710" width="9" height="10" fill="none" stroke="#104050" stroke-width=".8"/>
 <path d="M947.5 711 L950 708.5 H959.5 V718 L957 720.5 H947.5Z" fill="#40c8d8" stroke="#104050" stroke-width="1"/>
 <rect x="949" y="711" width="6" height="7" fill="none" stroke="#104050" stroke-width=".8"/>
 <!-- red tree -->
 <rect x="967.5" y="708.5" width="6" height="2.5" fill="#a0c0e0" stroke="#305080" stroke-width=".6"/>
 <path d="M970 711 V718 H980" stroke="#305080" stroke-width=".8" fill="none"/>
 <path d="M972 713 L978 720" stroke="#d01020" stroke-width="1.3"/>
 <!-- gray disabled -->
 <path d="M989 716 C992 710 1000 709 1004 711 C1000 714 995 717 990 719" fill="none" stroke="#d0d0d8" stroke-width="1.4"/>
 <!-- tree list -->
 <g fill="#a0b0e0" stroke="#4050a0" stroke-width=".6"><rect x="1010.5" y="708.5" width="5" height="2.5"/><rect x="1014.5" y="712.5" width="5" height="2.5"/><rect x="1019.5" y="716.5" width="6" height="2.5"/></g>
 <path d="M1012 711 V720" stroke="#303030" stroke-width=".8"/>
 <!-- yellow ball -->
 <path d="M1032 718 C1031 712 1036 708 1041 709" stroke="#8090b0" stroke-width=".8" fill="none" stroke-dasharray="1.5 1"/>
 <circle cx="1039.5" cy="715.5" r="5.5" fill="#f0e820" stroke="#303010" stroke-width=".8"/>
 <circle cx="1038" cy="719" r="2" fill="none" stroke="#202020" stroke-width="1"/>
 <!-- list -->
 <g fill="#5068b0"><rect x="1057" y="709" width="7" height="2"/><rect x="1057" y="712.5" width="7" height="2"/><rect x="1057" y="716" width="7" height="2"/><rect x="1057" y="719" width="7" height="1"/></g>
 <!-- blue box -->
 <path d="M1076 715 L1082 709 L1090 712 L1089 719 L1082 720 L1076 717Z" fill="#e8f0ff" stroke="#2a50c0" stroke-width="1"/>
 <path d="M1076 715 L1083 717 L1090 712 M1083 717 V720" stroke="#2a50c0" stroke-width=".8" fill="none"/>
</svg>
<svg class="a" style="left:1220px;top:700px" width="30" height="20"><path d="M5.5 4 V17" stroke="#c0c0cc"/><path d="M6.5 4 V17" stroke="#fafaff"/><path d="M11 5 L13 7 L11 9 M14 5 L16 7 L14 9" stroke="#c8c8d4" fill="none" stroke-width=".8"/></svg>
<div class="a" style="left:1095px;top:708px;width:124px;height:13px;background:#fcfcfc;border:1px solid #9a9aa4;border-bottom:none"></div>
<div class="t" style="left:1098px;top:711.5px;font-size:9px;color:#202020">Geometrical Set.1</div>
<svg class="a" style="left:1205px;top:710px" width="10" height="10"><path d="M2.5 4.5 H8.5 L5.5 7.5Z" fill="#101010"/></svg>



<svg class="a" style="left:1240px;top:700px" width="40" height="20" viewBox="1240 700 40 20">
 <path d="M1252 703 H1258 L1254.5 708" fill="none" stroke="#d87080" stroke-width="1.5"/>
 <path d="M1249 711.5 C1255 709 1259 711 1256 715 C1254 717.5 1249 718.5 1245.5 718" fill="none" stroke="#34346e" stroke-width="1.8"/>
 <path d="M1250.5 711.5 L1247 718" stroke="#34346e" stroke-width="1.5"/>
 <path d="M1261 707 C1257 706.5 1256 709 1258.5 711 C1261 713 1260 716.5 1256 717" fill="none" stroke="#d8c890" stroke-width="1.5"/>
 <text x="1252" y="723" font-family="Liberation Sans" font-weight="bold" font-style="italic" font-size="7" fill="#2a2a58">CATIA</text>
</svg>

<!-- tree -->
<div class="a" style="left:0;top:36px;width:1px;height:664px;background:#c4c4d0"></div><div class="a" style="left:1px;top:36px;width:1px;height:664px;background:#6a6a88"></div>
<div class="a" style="left:7px;top:56px;width:2px;height:123px;background:#e8e8f0"></div>
<div class="a" style="left:8px;top:71px;width:9px;height:2px;background:#e8e8f0"></div>
<div class="a" style="left:8px;top:92px;width:9px;height:2px;background:#e8e8f0"></div>
<div class="a" style="left:8px;top:113px;width:9px;height:2px;background:#e8e8f0"></div>
<div class="a" style="left:8px;top:135px;width:9px;height:2px;background:#e8e8f0"></div>
<div class="a" style="left:8px;top:156px;width:9px;height:2px;background:#e8e8f0"></div>
<div class="a" style="left:8px;top:177px;width:9px;height:2px;background:#e8e8f0"></div>
<div class="t tree" style="left:22px;top:47px">PART1</div>
<div class="t tree" style="left:37px;top:69px">xy plane</div>
<div class="t tree" style="left:37px;top:90px">yz plane</div>
<div class="t tree" style="left:37px;top:111px">zx plane</div>
<div class="t tree" style="left:37px;top:133px">Working supports</div>
<div class="t tree" style="left:37px;top:152.5px;letter-spacing:-0.18px;text-decoration:underline;text-underline-offset:1px">Geometrical Set.1</div>
<div class="t tree" style="left:37px;top:175px">PartBody</div>


<svg class="a" style="left:0;top:36px" width="40" height="160" viewBox="0 36 40 160">
 <defs>
  <pattern id="wsp" width="3" height="3" patternUnits="userSpaceOnUse"><rect width="3" height="3" fill="#525a98"/><rect width="1.6" height="1.6" fill="#98a0d4"/></pattern>
 </defs>
 <path d="M7.5 40.5 H16 L18.6 43.5 V54 H7.5 Z" fill="#f4f6fa"/>
 <path d="M16 40.5 V43.5 H18.6" fill="#c8ccd8"/>
 <g transform="translate(6.5 51.5)">
  <circle r="5.5" fill="#1a1a30" opacity=".5"/>
  <path d="M0-5.2 L1.2-3.4 3.3-4.1 3.2-2 5.2-1.2 3.9.4 5 2.2 2.9 2.8 2.6 4.9 .7 4.1 -.9 5.4 -1.8 3.6 -3.9 3.9 -3.6 1.9 -5.3.9 -4.1-.8 -4.9-2.7 -2.8-3 -2.3-5 -.5-4" fill="#ecebc4"/>
  <circle r="1.8" fill="#4a4a30"/>
 </g>
 <g fill="#ecf4b0">
  <path d="M19.3 75.2 L23.6 68.8 H32.2 L28 75.2 Z"/>
  <path d="M19.3 96.5 L23.6 90.1 H32.2 L28 96.5 Z"/>
  <path d="M19.3 117.8 L23.6 111.4 H32.2 L28 117.8 Z"/>
 </g>
 <g fill="none" stroke="#101020" stroke-width="1">
  <path d="M19.3 75.2 L23.6 68.8 H32.2"/>
  <path d="M19.3 96.5 L23.6 90.1 H32.2"/>
  <path d="M19.3 117.8 L23.6 111.4 H32.2"/>
 </g>
 <rect x="17" y="125.5" width="17.5" height="17.5" fill="url(#wsp)" opacity=".95"/>
 <circle cx="7.5" cy="134.5" r="4.6" fill="#c8c8d0"/>
 <circle cx="7.5" cy="134.5" r="3.6" fill="#e8e8ee"/>
 <path d="M4.6 134.5 H10.4 M7.5 131.6 V137.4" stroke="#000" stroke-width="1.8"/>
 <g>
  <path d="M19 151 C20 147.5 26 147 29.5 149 C32 150.5 31 155 29 157 L22 158 C19.5 156 18.3 153 19 151Z" fill="#f0e4a0"/>
  <path d="M21 152 C23 149.5 27 150 28 152 M22 154.5 C24 153 26.5 153 27.5 154.5" stroke="#b86a20" stroke-width="1.2" fill="none"/>
  <path d="M22 161.5 C25 158.5 29 158 32 160 L30 162.5 H22Z" fill="#d8ecb0"/>
  <path d="M19 161 C21 159 23 158.5 25 158" stroke="#6a98d8" stroke-width="1" fill="none"/>
  <path d="M31 147 C33 149 33 152 31 154" stroke="#7aa0e0" stroke-width=".8" fill="none"/>
 </g>
 <g transform="translate(24.5 177.3)">
  <circle r="8.3" fill="#1c2a40"/>
  <path d="M0-6.5 L1.5-4.6 4.2-5.2 4.2-2.7 6.5-1.4 5-.1 6.3 2.4 3.8 3.1 3.4 5.8 1.1 4.8 -1 6.5 -2.2 4.4 -4.8 4.8 -4.5 2.3 -6.6 1 -5.1-.8 -6.1-3.3 -3.5-3.8 -2.9-6.3 -.8-5.1Z" fill="#66dcb8"/>
  <circle r="2.4" fill="#1c3a40"/>
  <circle r="1.3" fill="#66dcb8"/>
 </g>
</svg>

<!-- Macros dialog -->
<div class="a" style="left:434px;top:326px;width:152px;height:225px;border-radius:5px 0 0 0;background:linear-gradient(#c6d3e0 0,#d6dfea 12px,#e4e6ee 22px,#dfe4ee 100%);border-left:1px solid #7c86a0;border-top:1px solid #8a93a8;border-bottom:1px solid #5a6070"></div>
<div class="a" style="left:440px;top:348px;width:145px;height:197px;background:linear-gradient(#efe7d4 0,#f0e6cc 40px,#f6e4c0 120px,#f8e0b4 100%)"></div>
<div class="a" style="left:446px;top:367px;width:139px;height:17px;background:#fcfcfc"></div>
<div class="a" style="left:446px;top:395px;width:139px;height:122px;background:#fdfdfd;border:1px solid #a8a8a8;border-right:none"></div>
<div class="a" style="left:447px;top:396px;width:138px;height:18px;background:linear-gradient(#ffffff,#f0f0f2);border-bottom:1px solid #e0e0e4"></div>
<div class="a" style="left:450px;top:429px;width:135px;height:14px;background:#3a94ee"></div>
<div class="a" style="left:440px;top:525px;width:45px;height:20px;background:radial-gradient(ellipse 28px 15px at 0px 20px,#34343e 0,#40444e 45%,#607888 62%,#88c0d8 74%,#d8d8b8 84%,#f2c078 92%,rgba(246,228,190,0) 125%)"></div>
<svg class="a" style="left:449px;top:369px" width="12" height="12"><path d="M.5 2.5 H4 L5 3.5 H10.5 V10.5 H.5Z" fill="#e8e890" stroke="#707040"/></svg>
<div class="t" style="left:443px;top:335px;font-size:9.5px;color:#5c6878">Macros</div>
<div class="t" style="left:446px;top:356.5px;font-size:9px;color:#202020">Current macro library or document</div>
<div class="t" style="left:464px;top:371.5px;font-size:9px;color:#202020">P:\Example Macros</div>
<div class="t" style="left:446px;top:385.5px;font-size:9px;color:#202020">Available macros:</div>
<div class="t" style="left:452px;top:401.5px;font-size:9px;color:#202020">Name</div>
<div class="t" style="left:452px;top:418.5px;font-size:9px;color:#202020">Change_to_White_Background.CATScript</div>
<div class="t" style="left:452px;top:433px;font-size:9px;color:#e8f4ff">Display_color_value.CATScript</div>

<!-- Macros editor -->
<div class="a" style="left:584px;top:48px;width:441px;height:598px;border-radius:6px 6px 0 0;background:#1e2c48"></div>
<div class="a" style="left:585px;top:49px;width:438px;height:596px;border-radius:5px 5px 0 0;background:linear-gradient(#bfd0dc 0,#adc8d8 4px,#b6cce0 12px,#c4d0e8 20px,#d0cfe6 26px,#d6d1e6 36px,#c0d6ec 40px,#b8d4ec 100%)"></div>
<div class="a" style="left:589px;top:72px;width:430px;height:14px;background:linear-gradient(#d0cfe6,#d8d2e6)"></div>
<div class="a" style="left:590px;top:86px;width:427px;height:554px;background:linear-gradient(90deg,#d4dce8 0,#e2e0d8 2px,#eee4cc 4px,#f2e6c8 6px,#f0e6cc 418px,#ece6d6 421px,#e6e4dc 427px)"></div>
<div class="a" style="left:590px;top:86px;width:427px;height:30px;background:linear-gradient(#e8e8e8 0,#dedede 3px,#dadada 28px,#b4b4b4 29px)"></div>
<div class="a" style="left:596px;top:116px;width:414px;height:506px;background:#fefefe;border-left:1px solid #d4d4d4"></div>
<div class="a" style="left:590px;top:622px;width:427px;height:18px;background:linear-gradient(90deg,#f6e2b6 0,#f6e4bc 30%,#f2e6c4 100%)"></div>
<div class="a" style="left:590px;top:622px;width:40px;height:18px;background:radial-gradient(ellipse 28px 15px at 0px 18px,#34343e 0,#40444e 45%,#607888 62%,#88c0d8 74%,#d8d8b8 84%,#f2c078 92%,rgba(242,226,184,0) 125%)"></div>

<div class="t" style="left:594px;top:58px;font-size:9px;color:#1e2838">Macros Editor - [P:\Example Macros\Display_color_value.CATScript *]</div>
<div class="t" style="left:596px;top:75px;font-size:9px;color:#1e1e1e"><u>F</u>ile</div>
<div class="t" style="left:628px;top:75px;font-size:9px;color:#1e1e1e"><u>E</u>dit</div>
<div class="t" style="left:662px;top:75px;font-size:9px;color:#1e1e1e"><u>V</u>iew</div>
<div class="t" style="left:699px;top:75px;font-size:9px;color:#1e1e1e"><u>H</u>elp</div>

<div class="a ed" style="left:600px;top:118.3px;line-height:11.43px;white-space:pre">'Author: Emmett Ross
'Last revised: 5-20-15
'Display the color array values
'==========================================
Sub CATMain()

Dim ColorValue As Viewer3D
Set ColorValue = CATIA.activeWindow.ActiveViewer

Dim ColorArray(2)
ColorValue.GetBackgroundcolor(colorarray)

Msgbox "The back

End Sub</div>

<div class="t" style="left:923px;top:625px;font-size:9px;color:#1e1e1e">Line : 13, Column : 17</div>

<!-- editor toolbar -->
<div class="a" style="left:597px;top:93px;width:21px;height:22px;background:#dadada;border-top:1px solid #f6f6f6;border-left:1px solid #f6f6f6;border-right:1px solid #7a7a7a;border-bottom:1px solid #7a7a7a;box-shadow:inset -1px -1px 0 #b4b4b4"></div><div class="a" style="left:618.5px;top:93px;width:21px;height:22px;background:#dadada;border-top:1px solid #f6f6f6;border-left:1px solid #f6f6f6;border-right:1px solid #7a7a7a;border-bottom:1px solid #7a7a7a;box-shadow:inset -1px -1px 0 #b4b4b4"></div><div class="a" style="left:640px;top:93px;width:21px;height:22px;background:#dadada;border-top:1px solid #f6f6f6;border-left:1px solid #f6f6f6;border-right:1px solid #7a7a7a;border-bottom:1px solid #7a7a7a;box-shadow:inset -1px -1px 0 #b4b4b4"></div><div class="a" style="left:676px;top:93px;width:20.5px;height:22px;background:#dadada;border-top:1px solid #f6f6f6;border-left:1px solid #f6f6f6;border-right:1px solid #7a7a7a;border-bottom:1px solid #7a7a7a;box-shadow:inset -1px -1px 0 #b4b4b4"></div><div class="a" style="left:696.5px;top:93px;width:21px;height:22px;background:#dadada;border-top:1px solid #f6f6f6;border-left:1px solid #f6f6f6;border-right:1px solid #7a7a7a;border-bottom:1px solid #7a7a7a;box-shadow:inset -1px -1px 0 #b4b4b4"></div><div class="a" style="left:718px;top:93px;width:21.5px;height:22px;background:#dadada;border-top:1px solid #f6f6f6;border-left:1px solid #f6f6f6;border-right:1px solid #7a7a7a;border-bottom:1px solid #7a7a7a;box-shadow:inset -1px -1px 0 #b4b4b4"></div><div class="a" style="left:754px;top:93px;width:21.5px;height:22px;background:#dadada;border-top:1px solid #f6f6f6;border-left:1px solid #f6f6f6;border-right:1px solid #7a7a7a;border-bottom:1px solid #7a7a7a;box-shadow:inset -1px -1px 0 #b4b4b4"></div>
<svg class="a" style="left:590px;top:86px" width="200" height="30" viewBox="590 86 200 30">
 <!-- new -->
 <path d="M601.5 97.5 H610.5 L613.5 100.5 V111 H601.5Z" fill="#f6f6dc" stroke="#303030"/>
 <path d="M610.5 97.5 V100.5 H613.5" fill="none" stroke="#303030"/>
 <!-- open -->
 <path d="M621.5 108.5 V99.5 L623.5 98 H627 L628 99.5 H632 V102" fill="#c8c070" stroke="#3a3a20"/>
 <path d="M621.5 108.5 L624.5 102 H636 L632.5 108.5Z" fill="#ecc030" stroke="#3a3a20"/>
 <path d="M631 98 L635 99 L633 101" fill="none" stroke="#303030" stroke-width="1.2"/>
 <!-- save -->
 <rect x="643.5" y="97.5" width="13" height="13" rx="1" fill="#8ca060" stroke="#203018"/>
 <rect x="646" y="98" width="8" height="5" fill="#e8e8e0"/>
 <rect x="646" y="105.5" width="8" height="5" fill="#000"/>
 <rect x="652" y="106.5" width="1.8" height="3.5" fill="#e0e0e0"/>
 <!-- btn4 -->
 <path d="M683.5 99.5 H690.5 L692.5 101.5 V110.5 H683.5Z" fill="#f0f0f0" stroke="#404040"/>
 <path d="M685 103 H691 M685 105 H691 M685 107 H691" stroke="#202020" stroke-width="1"/>
 <path d="M678.5 97 L686 104" stroke="#1818c0" stroke-width="2"/>
 <path d="M682 105 L687 105.5 L686.5 100.5Z" fill="#1818c0"/>
 <!-- btn5 -->
 <path d="M699.5 104 L703 97 L706 103" fill="none" stroke="#202020" stroke-width="1"/>
 <g fill="#102060"><path d="M703 104 L705.5 100 H707 V112 H703Z"/><path d="M709 104 L711.5 100 H713 V112 H709Z" /><rect x="706.5" y="104" width="3" height="3"/></g>
 <g fill="#5070c0"><rect x="704" y="106" width="1.5" height="4"/><rect x="710" y="106" width="1.5" height="4"/></g>
 <!-- btn6 -->
 <g fill="#50a0a8" stroke="#305050" stroke-width=".5"><rect x="725" y="97.5" width="5" height="2.5"/><rect x="729" y="101" width="5" height="2.5"/><rect x="731" y="104.5" width="5" height="2.5"/><rect x="731" y="108" width="5" height="2.5"/></g>
 <path d="M720 106 L723 103.5 L727 106 L723 108.5Z" fill="#f0f0d0" stroke="#303030" stroke-width=".7"/>
 <path d="M723 103.5 L727 99 M727 106 H731" stroke="#d09090" stroke-width=".6"/>
 <!-- btn7 -->
 <rect x="756" y="97" width="3.5" height="3.5" fill="#303030"/>
 <path d="M759 100 L763 104 L769 101 M763 106 L760 111 M765 105 L770 110" stroke="#c090c0" stroke-width=".7"/>
 <rect x="761" y="102.5" width="5" height="3.5" fill="#f0d090" stroke="#a08040" stroke-width=".6"/>
 <g fill="none" stroke="#303030" stroke-width="1.1"><circle cx="770" cy="102.5" r="1.6"/><circle cx="760.5" cy="110" r="1.6"/><circle cx="770" cy="110" r="1.6"/></g>
</svg>
<!-- title buttons -->
<div class="a" style="left:942px;top:56px;width:22px;height:13px;border:1px solid #8ea4bc;border-radius:3px;background:linear-gradient(#dce6f0,#c4d4e4)"></div>
<div class="a" style="left:949px;top:63px;width:9px;height:3px;border:1px solid #506078;background:#f0f4f8;border-radius:1px"></div>
<div class="a" style="left:967px;top:56px;width:22px;height:13px;border:1px solid #b0c0d0;border-radius:3px;background:linear-gradient(#d8e2ec,#c8d4e2)"></div>
<div class="a" style="left:974px;top:60px;width:7px;height:5px;border:1px solid #506078;background:#e8eef4"></div>
<div class="a" style="left:992px;top:56px;width:24px;height:13px;border:1px solid #7a3020;border-radius:3px;background:linear-gradient(#e8a090,#c85a40 50%,#c04830)"></div>
<svg class="a" style="left:992px;top:56px" width="24" height="13"><path d="M9 3 L15 10 M15 3 L9 10" stroke="#f8f0e8" stroke-width="2.2"/></svg>
<!-- I-beam cursor -->
<svg class="a" style="left:670px;top:162px" width="12" height="18"><path d="M3 3.5 H9 M6 3.5 V15.5 M3 15.5 H9" stroke="#202020" stroke-width="1"/></svg>
<div class="a" style="left:675px;top:255px;width:1px;height:11px;background:#000"></div>


</body></html>
